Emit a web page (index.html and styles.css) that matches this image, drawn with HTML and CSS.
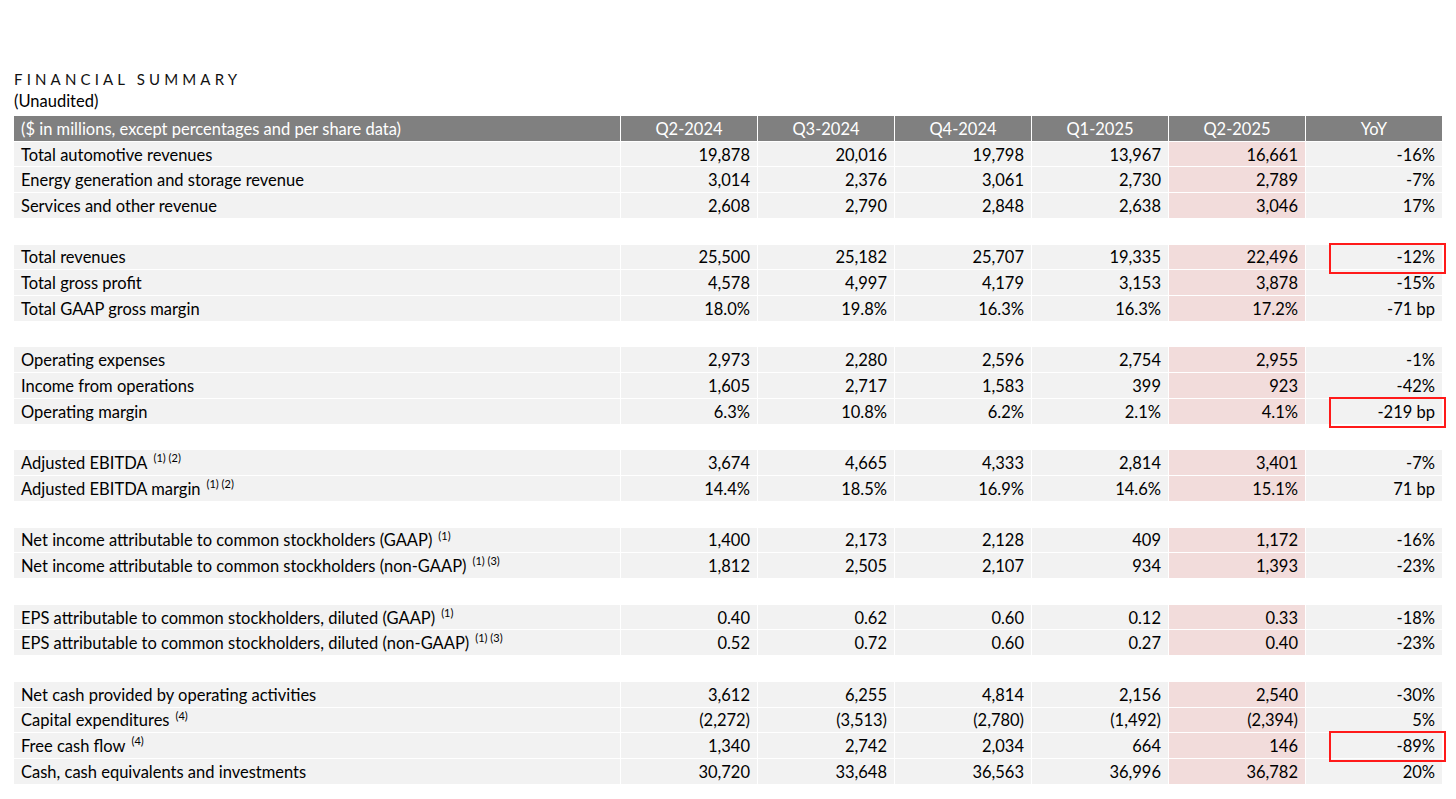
FILE: index.html
```html
<!DOCTYPE html>
<html lang="en">
<head>
<meta charset="utf-8">
<title>Financial Summary</title>
<link rel="stylesheet" href="styles.css">
</head>
<body>
<div class="page">
  <div class="title">FINANCIAL SUMMARY</div>
  <div class="subtitle">(Unaudited)</div>
  <div class="table">
    <div class="row head">
      <div class="c label">($ in millions, except percentages and per share data)</div>
      <div class="c">Q2-2024</div><div class="c">Q3-2024</div><div class="c">Q4-2024</div><div class="c">Q1-2025</div><div class="c">Q2-2025</div><div class="c">YoY</div>
    </div>

    <div class="row"><div class="c label">Total automotive revenues</div><div class="c">19,878</div><div class="c">20,016</div><div class="c">19,798</div><div class="c">13,967</div><div class="c hl">16,661</div><div class="c">-16%</div></div>
    <div class="row"><div class="c label">Energy generation and storage revenue</div><div class="c">3,014</div><div class="c">2,376</div><div class="c">3,061</div><div class="c">2,730</div><div class="c hl">2,789</div><div class="c">-7%</div></div>
    <div class="row"><div class="c label">Services and other revenue</div><div class="c">2,608</div><div class="c">2,790</div><div class="c">2,848</div><div class="c">2,638</div><div class="c hl">3,046</div><div class="c">17%</div></div>
    <div class="row blank"></div>

    <div class="row"><div class="c label">Total revenues</div><div class="c">25,500</div><div class="c">25,182</div><div class="c">25,707</div><div class="c">19,335</div><div class="c hl">22,496</div><div class="c boxed">-12%<span class="mark"></span></div></div>
    <div class="row"><div class="c label">Total gross profit</div><div class="c">4,578</div><div class="c">4,997</div><div class="c">4,179</div><div class="c">3,153</div><div class="c hl">3,878</div><div class="c">-15%</div></div>
    <div class="row"><div class="c label">Total GAAP gross margin</div><div class="c">18.0%</div><div class="c">19.8%</div><div class="c">16.3%</div><div class="c">16.3%</div><div class="c hl">17.2%</div><div class="c">-71 bp</div></div>
    <div class="row blank"></div>

    <div class="row"><div class="c label">Operating expenses</div><div class="c">2,973</div><div class="c">2,280</div><div class="c">2,596</div><div class="c">2,754</div><div class="c hl">2,955</div><div class="c">-1%</div></div>
    <div class="row"><div class="c label">Income from operations</div><div class="c">1,605</div><div class="c">2,717</div><div class="c">1,583</div><div class="c">399</div><div class="c hl">923</div><div class="c">-42%</div></div>
    <div class="row"><div class="c label">Operating margin</div><div class="c">6.3%</div><div class="c">10.8%</div><div class="c">6.2%</div><div class="c">2.1%</div><div class="c hl">4.1%</div><div class="c boxed">-219 bp<span class="mark"></span></div></div>
    <div class="row blank"></div>

    <div class="row"><div class="c label">Adjusted EBITDA<sup>(1) (2)</sup></div><div class="c">3,674</div><div class="c">4,665</div><div class="c">4,333</div><div class="c">2,814</div><div class="c hl">3,401</div><div class="c">-7%</div></div>
    <div class="row"><div class="c label">Adjusted EBITDA margin<sup>(1) (2)</sup></div><div class="c">14.4%</div><div class="c">18.5%</div><div class="c">16.9%</div><div class="c">14.6%</div><div class="c hl">15.1%</div><div class="c">71 bp</div></div>
    <div class="row blank"></div>

    <div class="row"><div class="c label">Net income attributable to common stockholders (GAAP)<sup>(1)</sup></div><div class="c">1,400</div><div class="c">2,173</div><div class="c">2,128</div><div class="c">409</div><div class="c hl">1,172</div><div class="c">-16%</div></div>
    <div class="row"><div class="c label">Net income attributable to common stockholders (non-GAAP)<sup>(1) (3)</sup></div><div class="c">1,812</div><div class="c">2,505</div><div class="c">2,107</div><div class="c">934</div><div class="c hl">1,393</div><div class="c">-23%</div></div>
    <div class="row blank"></div>

    <div class="row"><div class="c label">EPS attributable to common stockholders, diluted (GAAP)<sup>(1)</sup></div><div class="c">0.40</div><div class="c">0.62</div><div class="c">0.60</div><div class="c">0.12</div><div class="c hl">0.33</div><div class="c">-18%</div></div>
    <div class="row"><div class="c label">EPS attributable to common stockholders, diluted (non-GAAP)<sup>(1) (3)</sup></div><div class="c">0.52</div><div class="c">0.72</div><div class="c">0.60</div><div class="c">0.27</div><div class="c hl">0.40</div><div class="c">-23%</div></div>
    <div class="row blank"></div>

    <div class="row"><div class="c label">Net cash provided by operating activities</div><div class="c">3,612</div><div class="c">6,255</div><div class="c">4,814</div><div class="c">2,156</div><div class="c hl">2,540</div><div class="c">-30%</div></div>
    <div class="row"><div class="c label">Capital expenditures<sup>(4)</sup></div><div class="c">(2,272)</div><div class="c">(3,513)</div><div class="c">(2,780)</div><div class="c">(1,492)</div><div class="c hl">(2,394)</div><div class="c">5%</div></div>
    <div class="row"><div class="c label">Free cash flow<sup>(4)</sup></div><div class="c">1,340</div><div class="c">2,742</div><div class="c">2,034</div><div class="c">664</div><div class="c hl">146</div><div class="c boxed">-89%<span class="mark"></span></div></div>
    <div class="row"><div class="c label">Cash, cash equivalents and investments</div><div class="c">30,720</div><div class="c">33,648</div><div class="c">36,563</div><div class="c">36,996</div><div class="c hl">36,782</div><div class="c">20%</div></div>
  </div>
</div>
</body>
</html>
```

FILE: styles.css
```css
html, body {
  margin: 0;
  padding: 0;
  background: #ffffff;
}

body {
  font-family: Lato, "Open Sans", sans-serif;
  color: #000000;
}

.page {
  padding: 68px 0 0 14px;
  width: 1428px;
}

.title {
  font-size: 15px;
  line-height: 22px;
  letter-spacing: 4.15px;
  color: #111111;
}

.subtitle {
  font-size: 16.5px;
  line-height: 22px;
  margin-bottom: 4px;
}

.table {
  display: flex;
  flex-direction: column;
  gap: 1px;
}

.row {
  display: grid;
  grid-template-columns: 606px repeat(6, 136px);
  column-gap: 1px;
  height: 24.73px;
  font-size: 16.5px;
}

.row.blank {
  background: #ffffff;
}

.c {
  background: #f2f2f2;
  display: flex;
  align-items: center;
  justify-content: flex-end;
  padding: 1px 7px 0;
  white-space: nowrap;
}

.c.label {
  justify-content: flex-start;
}

.c.hl {
  background: #f2dcdb;
}

.head .c {
  background: #808080;
  color: #ffffff;
  justify-content: center;
}

.head .c.label {
  justify-content: flex-start;
}

sup {
  font-size: 11px;
  line-height: 0;
  margin-left: 6px;
  align-self: flex-start;
  margin-top: 7px;
}

.boxed {
  position: relative;
}

.mark {
  position: absolute;
  left: 23px;
  right: -4px;
  top: -2px;
  height: 31px;
  box-sizing: border-box;
  border: 2px solid #ff1a1a;
}
```
